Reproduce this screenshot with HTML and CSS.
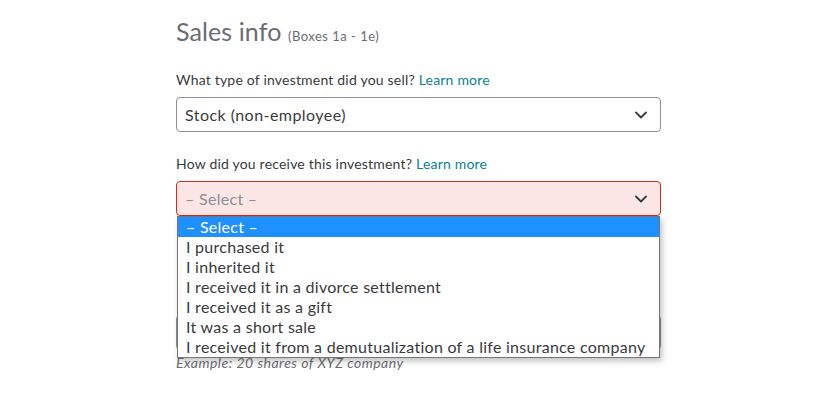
FILE: index.html
```html
<!DOCTYPE html>
<html>
<head>
<meta charset="utf-8">
<link rel="stylesheet" href="styles.css">
</head>
<body>
<main class="form">
  <h1 class="title">Sales info <span class="title-note">(Boxes 1a - 1e)</span></h1>

  <label class="label label-1">What type of investment did you sell? <a class="link">Learn more</a></label>
  <div class="select">
    <span class="select-value">Stock (non-employee)</span>
    <svg class="chev" width="12" height="8" viewBox="0 0 12 8"><path d="M1 1.5 L6 6.5 L11 1.5" fill="none" stroke="#393a3d" stroke-width="1.8" stroke-linecap="round" stroke-linejoin="round"/></svg>
  </div>

  <label class="label label-2">How did you receive this investment? <a class="link">Learn more</a></label>
  <div class="select-wrap">
    <div class="select select-error">
      <span class="select-value placeholder">– Select –</span>
      <svg class="chev" width="12" height="8" viewBox="0 0 12 8"><path d="M1 1.5 L6 6.5 L11 1.5" fill="none" stroke="#393a3d" stroke-width="1.8" stroke-linecap="round" stroke-linejoin="round"/></svg>
    </div>
    <ul class="listbox">
      <li class="opt opt-active">– Select –</li>
      <li class="opt">I purchased it</li>
      <li class="opt">I inherited it</li>
      <li class="opt">I received it in a divorce settlement</li>
      <li class="opt">I received it as a gift</li>
      <li class="opt">It was a short sale</li>
      <li class="opt">I received it from a demutualization of a life insurance company</li>
    </ul>
  </div>

  <div class="input"></div>
  <p class="hint">Example: 20 shares of XYZ company</p>

  <label class="label label-4">Select the information you see on your Form 1099-B</label>
</main>
</body>
</html>
```
FILE: styles.css
```css
html, body {
  margin: 0;
  padding: 0;
  background: #ffffff;
  overflow: hidden;
}
body {
  font-family: "Lato", "Open Sans", sans-serif;
  color: #393a3d;
}
.form {
  width: 485px;
  margin-left: 176px;
  padding-top: 15px;
  display: flex;
  flex-direction: column;
}
.title {
  margin: 0;
  font-size: 25px;
  line-height: 32px;
  font-weight: 400;
  color: #6b6c72;
  letter-spacing: 0.1px;
}
.title-note {
  font-size: 13px;
  color: #6b6c72;
  letter-spacing: 0.5px;
}
.label {
  display: block;
  font-size: 14px;
  line-height: 20px;
  letter-spacing: 0.2px;
  color: #393a3d;
  margin-top: 22px;
  margin-bottom: 7px;
}
.label-1 { margin-top: 18px; }
.label-4 { margin-top: 24px; }
.link {
  color: #0a8197;
  cursor: pointer;
}
.select {
  box-sizing: border-box;
  height: 35px;
  border: 1px solid #8d9096;
  border-radius: 4px;
  display: flex;
  align-items: center;
  justify-content: space-between;
  padding: 0 13px 0 8px;
  background: #fff;
}
.select-value {
  font-size: 16px;
  letter-spacing: 0.45px;
  color: #393a3d;
}
.placeholder {
  color: #8d9096;
  letter-spacing: 0.3px;
}
.select-wrap {
  position: relative;
}
.select-error {
  border-color: #d52b1e;
  background: #fae6e4;
}
.chev { display: block; }
.listbox {
  position: absolute;
  left: 1px;
  right: 1px;
  top: 35px;
  margin: 0;
  padding: 0;
  list-style: none;
  background: #fff;
  border: 1px solid #767676;
  box-shadow: 2px 3px 6px rgba(0, 0, 0, 0.25);
  z-index: 2;
}
.opt {
  height: 20px;
  line-height: 20px;
  font-size: 16px;
  letter-spacing: 0.27px;
  padding-left: 8px;
  color: #393a3d;
  white-space: nowrap;
}
.opt-active {
  background: #1e90ff;
  color: #fff;
}
.input {
  box-sizing: border-box;
  height: 35px;
  margin-top: 99px;
  border: 1px solid #8d9096;
  border-radius: 4px;
}
.hint {
  margin: 4px 0 0;
  font-size: 14px;
  line-height: 18px;
  letter-spacing: 0.5px;
  font-style: italic;
  color: #6b6c72;
}
```
